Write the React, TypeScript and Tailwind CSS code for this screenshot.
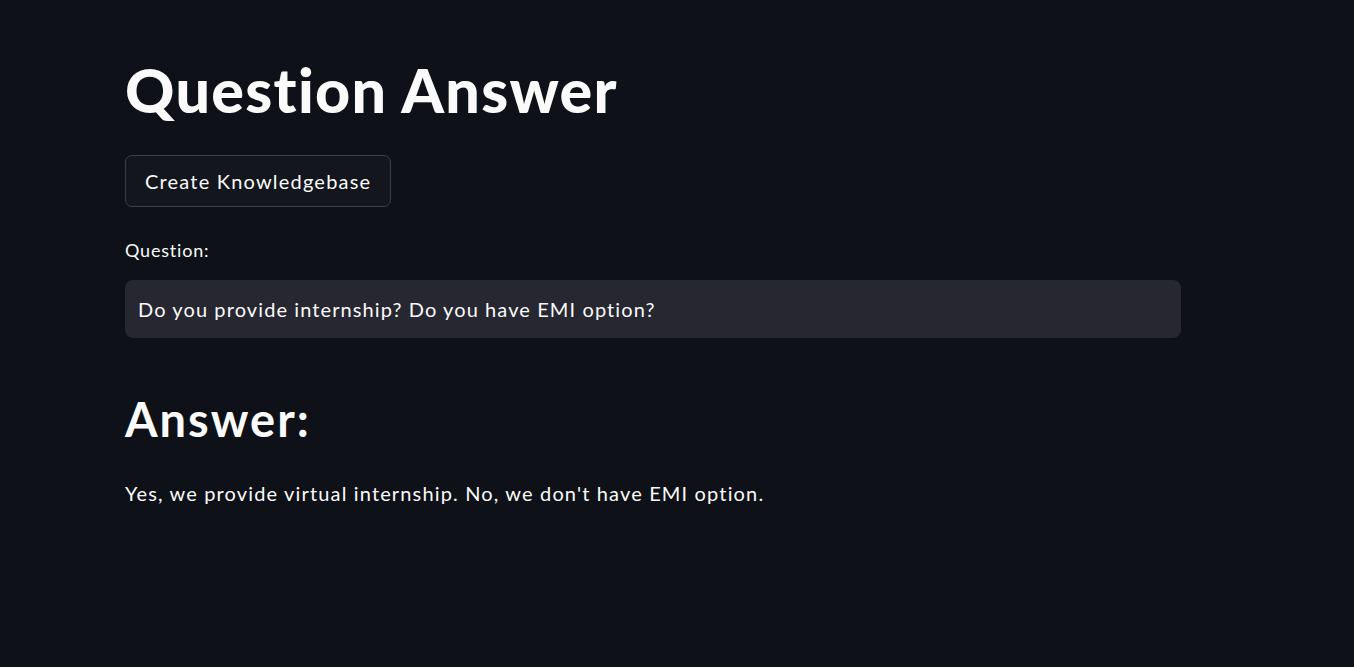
import React from "react";

export default function App() {
  return (
    <div
      className="min-h-[667px] w-full bg-[#0e1117] text-[#fafafa]"
      style={{ fontFamily: "Lato, 'Noto Sans', sans-serif" }}
    >
      <div className="ml-[125px] w-[1056px] pt-[54px]">
        <h1 className="text-[61px] font-black leading-[72px] tracking-[1.3px]">Question Answer</h1>
        <div className="mt-[29px]">
          <button className="h-[52px] rounded-[7px] border border-[#3d3f47] bg-[#13161d] px-[19px] text-[20px] tracking-[1.2px] text-[#fafafa]">
            Create Knowledgebase
          </button>
        </div>
        <div className="mt-[31px] text-[18px] leading-[24px] tracking-[0.8px]">Question:</div>
        <div className="mt-[18px] flex h-[58px] items-center rounded-[8px] bg-[#262730] px-[13px] text-[20px] tracking-[1.1px]">
          Do you provide internship? Do you have EMI option?
        </div>
        <h2 className="mt-[51px] text-[47px] font-bold leading-[60px] tracking-[2px]">Answer:</h2>
        <p className="mt-[29px] text-[20px] leading-[30px] tracking-[1.15px]">
          Yes, we provide virtual internship. No, we don't have EMI option.
        </p>
      </div>
    </div>
  );
}
